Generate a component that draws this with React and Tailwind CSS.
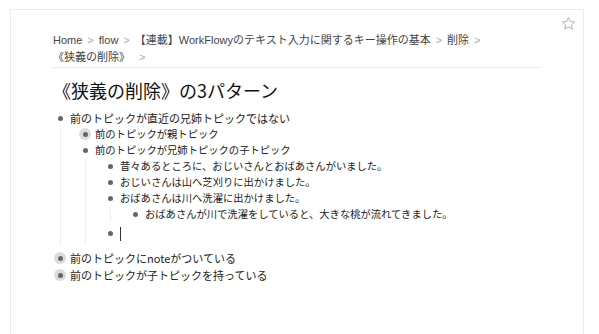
import React from "react";

function Bullet({ halo }) {
  return (
    <span className="w-[14px] h-full flex items-center justify-center shrink-0">
      <span
        className={
          halo
            ? "w-[12px] h-[12px] rounded-full bg-[#dcdcdc] flex items-center justify-center"
            : "w-[12px] h-[12px] rounded-full flex items-center justify-center"
        }
      >
        <span className="w-[5px] h-[5px] rounded-full bg-[#666]" />
      </span>
    </span>
  );
}

function Row({ text, halo, top, extra }) {
  return (
    <div className={`flex items-center h-[16px] ${extra || ""}`}>
      <Bullet halo={halo} />
      <span
        className={
          top
            ? "ml-[3px] text-[11px] leading-[16px] text-[#222] whitespace-nowrap"
            : "ml-[3px] text-[10.3px] leading-[16px] text-[#222] whitespace-nowrap"
        }
      >
        {text}
      </span>
    </div>
  );
}

function Children({ children }) {
  return <div className="ml-[7px] border-l border-[#eeeeee] pl-[17px]">{children}</div>;
}

function Sep() {
  return <span className="text-[#aaa] mx-[5px]">&gt;</span>;
}

export default function App() {
  return (
    <div className="w-[599px] h-[334px] bg-white overflow-hidden font-['Liberation_Sans','Noto_Sans_CJK_JP',sans-serif]">
      <div className="relative mt-[9px] ml-[10px] w-[574px] h-[325px] border border-b-0 border-[#ececec] px-[42px] pt-[22px]">
        <svg
          className="absolute right-[7px] top-[6px]"
          width="15"
          height="15"
          viewBox="0 0 24 24"
          fill="none"
          stroke="#b0b0b0"
          strokeWidth="1.6"
          strokeLinejoin="round"
        >
          <polygon points="12,2.5 14.9,8.9 21.8,9.6 16.6,14.2 18.1,21 12,17.5 5.9,21 7.4,14.2 2.2,9.6 9.1,8.9" />
        </svg>

        <div className="border-b border-[#e8e8e8] pb-[1px] text-[11px] leading-[17px] text-[#444]">
          <div className="whitespace-nowrap">
            Home<Sep />flow<Sep />【連載】WorkFlowyのテキスト入力に関するキー操作の基本<Sep />削除<Sep />
          </div>
          <div className="whitespace-nowrap">
            《狭義の削除》<span className="text-[#aaa] ml-[9px]">&gt;</span>
          </div>
        </div>

        <div className="mt-[10px] h-[24px] leading-[24px] text-[18px] text-[#111] font-['Noto_Sans_CJK_JP',sans-serif]">
          《狭義の削除》の3パターン
        </div>

        <div className="mt-[8px] font-['Noto_Sans_CJK_JP',sans-serif]">
          <Row top text="前のトピックが直近の兄姉トピックではない" />
          <Children>
            <Row halo text="前のトピックが親トピック" />
            <Row text="前のトピックが兄姉トピックの子トピック" />
            <Children>
              <Row text="昔々あるところに、おじいさんとおばあさんがいました。" />
              <Row text="おじいさんは山へ芝刈りに出かけました。" />
              <Row text="おばあさんは川へ洗濯に出かけました。" />
              <Children>
                <Row text="おばあさんが川で洗濯をしていると、大きな桃が流れてきました。" />
              </Children>
              <div className="flex items-center h-[23px]">
                <Bullet />
                <span className="ml-[3px] w-[1px] h-[14px] bg-[#333]" />
              </div>
            </Children>
          </Children>
          <Row top halo text="前のトピックにnoteがついている" extra="mt-[5px]" />
          <Row top halo text="前のトピックが子トピックを持っている" extra="mt-[1px]" />
        </div>
      </div>
    </div>
  );
}
